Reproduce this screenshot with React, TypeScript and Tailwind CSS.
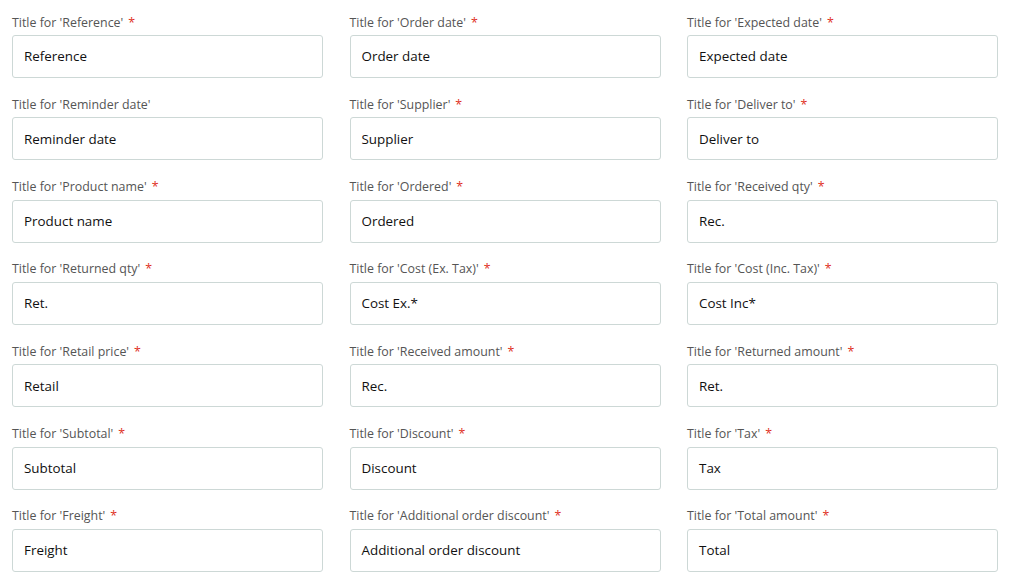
import React from "react";

const fields: [string, string, boolean][] = [
  ["Reference", "Reference", true],
  ["Order date", "Order date", true],
  ["Expected date", "Expected date", true],
  ["Reminder date", "Reminder date", false],
  ["Supplier", "Supplier", true],
  ["Deliver to", "Deliver to", true],
  ["Product name", "Product name", true],
  ["Ordered", "Ordered", true],
  ["Received qty", "Rec.", true],
  ["Returned qty", "Ret.", true],
  ["Cost (Ex. Tax)", "Cost Ex.*", true],
  ["Cost (Inc. Tax)", "Cost Inc*", true],
  ["Retail price", "Retail", true],
  ["Received amount", "Rec.", true],
  ["Returned amount", "Ret.", true],
  ["Subtotal", "Subtotal", true],
  ["Discount", "Discount", true],
  ["Tax", "Tax", true],
  ["Freight", "Freight", true],
  ["Additional order discount", "Additional order discount", true],
  ["Total amount", "Total", true],
];

export default function App() {
  return (
    <div
      className="w-[1016px] h-[583px] bg-white overflow-hidden"
      style={{ fontFamily: '"Open Sans", "Noto Sans", sans-serif' }}
    >
      <div className="w-[1010px] px-3 pt-[13.5px] grid grid-cols-3 gap-x-[26.5px] gap-y-[17.83px]">
        {fields.map(([title, value, req], i) => (
          <div key={i} className="flex flex-col">
            <div className="h-[18px] leading-[18px] text-[12.4px] text-[#555] mb-[3.5px] whitespace-nowrap">
              Title for '{title}'
              {req && <span className="text-[#e0301e] ml-[5px]">*</span>}
            </div>
            <div className="h-[43px] border border-[#cdd8d6] rounded-[3px] flex items-center pl-[11px] text-[13.4px] text-[#111]">
              {value}
            </div>
          </div>
        ))}
      </div>
    </div>
  );
}
